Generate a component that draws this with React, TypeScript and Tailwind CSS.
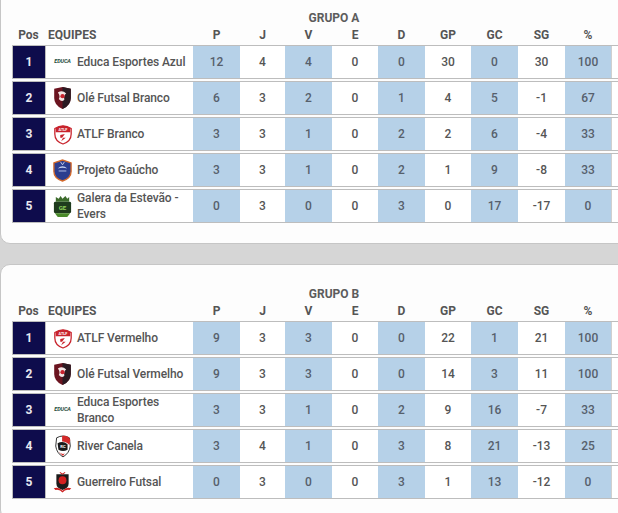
import type { ReactNode } from "react";

type Team = {
  pos: number;
  name: string;
  logo: ReactNode;
  stats: [number, number, number, number, number, number, number, number, number];
};

const COLS: Array<{ label: string; w: string }> = [
  { label: "P", w: "w-[47px]" },
  { label: "J", w: "w-[45px]" },
  { label: "V", w: "w-[47px]" },
  { label: "E", w: "w-[46px]" },
  { label: "D", w: "w-[47px]" },
  { label: "GP", w: "w-[46px]" },
  { label: "GC", w: "w-[47px]" },
  { label: "SG", w: "w-[47px]" },
  { label: "%", w: "w-[46px]" },
];

function EducaLogo() {
  return (
    <span className="flex w-[22px] items-center justify-center text-[5.5px] font-bold italic leading-none tracking-tight text-[#1d4a3a]">
      EDUCA
    </span>
  );
}

function OleLogo() {
  return (
    <svg viewBox="0 0 22 26" className="h-[24px] w-[21px]">
      <path d="M2 3 L11 1 L20 3 L20 13 Q20 21 11 25 Q2 21 2 13 Z" fill="#6b1420" />
      <path d="M11 1 L20 3 L20 13 Q20 21 11 25 Z" fill="#2a1a22" />
      <path d="M6 7 Q11 4 15 8 Q12 10 13 15 Q10 18 7 14 Q9 11 6 7 Z" fill="#f3e6e6" />
      <circle cx="11" cy="11" r="2.3" fill="#c9232f" />
    </svg>
  );
}

function AtlfLogo() {
  return (
    <svg viewBox="0 0 22 24" className="h-[22px] w-[20px]">
      <path d="M2 6 Q11 0 20 6 L20 12 Q20 20 11 23 Q2 20 2 12 Z" fill="#ffffff" stroke="#c8232c" strokeWidth="1.4" />
      <path d="M3 5.5 Q11 0.5 19 5.5 L19 10 L3 10 Z" fill="#c8232c" />
      <text x="11" y="9" textAnchor="middle" fontSize="4.2" fontWeight="700" fill="#ffffff" fontFamily="Roboto, sans-serif">ATLF</text>
      <path d="M8 13 L13 12 L10 16 L14 16 L9 20 L11 16 L8 16 Z" fill="#c8232c" />
    </svg>
  );
}

function GauchoLogo() {
  return (
    <svg viewBox="0 0 22 24" className="h-[23px] w-[21px]">
      <path d="M2 4 L11 1 L20 4 L20 13 Q20 20 11 23 Q2 20 2 13 Z" fill="#2c3d8f" stroke="#d4692a" strokeWidth="1.4" />
      <path d="M6 10 Q11 5 16 10 Q11 8 6 10 Z" fill="#c9d3f0" />
      <rect x="7" y="12" width="8" height="1" fill="#b7c2e8" />
      <path d="M9 3 L11 6 L13 3" stroke="#e8eefc" strokeWidth="0.8" fill="none" />
    </svg>
  );
}

function GaleraLogo() {
  return (
    <svg viewBox="0 0 22 24" className="h-[23px] w-[21px]">
      <rect x="2" y="7" width="18" height="12" rx="1.5" fill="#1f3b1d" />
      <path d="M4 7 L4 2 L7 4 L9 1 L11 4 L14 1 L16 4 L18 2 L18 7 Z" fill="#3d6b2c" />
      <text x="11" y="15.5" textAnchor="middle" fontSize="6.5" fontWeight="700" fill="#8fd05a" fontFamily="Roboto, sans-serif">GE</text>
      <path d="M3 19 L19 19 L16 23 L6 23 Z" fill="#4a8a2a" />
    </svg>
  );
}

function RiverLogo() {
  return (
    <svg viewBox="0 0 22 26" className="h-[24px] w-[20px]">
      <path d="M4 4 Q11 0 18 4 L19 13 Q18 21 11 25 Q4 21 3 13 Z" fill="#ffffff" stroke="#222" strokeWidth="1" />
      <path d="M10 2 Q17 1 19 6 L18 12 Q15 8 10 8 Z" fill="#d42a2a" />
      <path d="M5 10 Q11 7 16 11 L16 17 Q11 20 6 17 Z" fill="#1a1a1a" />
      <text x="11" y="15.5" textAnchor="middle" fontSize="4.5" fontWeight="700" fill="#ffffff" fontFamily="Roboto, sans-serif">RC</text>
      <path d="M6 19 Q10 23 13 21 L11 24 Z" fill="#d42a2a" />
    </svg>
  );
}

function GuerreiroLogo() {
  return (
    <svg viewBox="0 0 24 26" className="h-[24px] w-[22px]">
      <path d="M5 4 L19 4 L19 15 Q19 20 12 22 Q5 20 5 15 Z" fill="#1b1b1b" />
      <path d="M9 2 L12 4 L15 2" stroke="#cc2020" strokeWidth="1.2" fill="none" />
      <circle cx="12" cy="11" r="4.5" fill="#d42020" />
      <path d="M2 20 Q8 18 12 23 Q16 18 22 20 L20 22 Q15 21 12 25 Q9 21 4 22 Z" fill="#cc2020" />
    </svg>
  );
}

const GROUP_A: Team[] = [
  { pos: 1, name: "Educa Esportes Azul", logo: <EducaLogo />, stats: [12, 4, 4, 0, 0, 30, 0, 30, 100] },
  { pos: 2, name: "Olé Futsal Branco", logo: <OleLogo />, stats: [6, 3, 2, 0, 1, 4, 5, -1, 67] },
  { pos: 3, name: "ATLF Branco", logo: <AtlfLogo />, stats: [3, 3, 1, 0, 2, 2, 6, -4, 33] },
  { pos: 4, name: "Projeto Gaúcho", logo: <GauchoLogo />, stats: [3, 3, 1, 0, 2, 1, 9, -8, 33] },
  { pos: 5, name: "Galera da Estevão - Evers", logo: <GaleraLogo />, stats: [0, 3, 0, 0, 3, 0, 17, -17, 0] },
];

const GROUP_B: Team[] = [
  { pos: 1, name: "ATLF Vermelho", logo: <AtlfLogo />, stats: [9, 3, 3, 0, 0, 22, 1, 21, 100] },
  { pos: 2, name: "Olé Futsal Vermelho", logo: <OleLogo />, stats: [9, 3, 3, 0, 0, 14, 3, 11, 100] },
  { pos: 3, name: "Educa Esportes Branco", logo: <EducaLogo />, stats: [3, 3, 1, 0, 2, 9, 16, -7, 33] },
  { pos: 4, name: "River Canela", logo: <RiverLogo />, stats: [3, 4, 1, 0, 3, 8, 21, -13, 25] },
  { pos: 5, name: "Guerreiro Futsal", logo: <GuerreiroLogo />, stats: [0, 3, 0, 0, 3, 1, 13, -12, 0] },
];

function GroupCard({ title, teams }: { title: string; teams: Team[] }) {
  return (
    <section className="w-[680px] shrink-0 rounded-[10px] border border-[#c6c6c6] bg-[#fdfdfd] pb-[20px] pl-[11px] pt-[20px]">
      <div className="w-[644px]">
        <p className="text-center text-[12px] font-bold leading-[18px] text-[#5c5c5c]">{title}</p>
        <div className="flex h-[16px] items-center text-[12px] font-bold text-[#555]">
          <span className="w-[33px] text-center">Pos</span>
          <span className="w-[148px] pl-[3px]">EQUIPES</span>
          {COLS.map((c) => (
            <span key={c.label} className={`${c.w} text-center`}>
              {c.label}
            </span>
          ))}
        </div>
        <div className="mt-[2px] flex flex-col gap-[2px]">
          {teams.map((t) => (
            <div
              key={t.pos}
              className="flex h-[34px] border-y border-l border-[#bdbdbd] text-[12px] font-medium text-[#555]"
            >
              <div className="flex w-[32px] items-center justify-center bg-[#0e0c4c] font-bold text-[#e8e8f0]">
                {t.pos}
              </div>
              <div className="flex w-[148px] items-center gap-[4px] border-l border-[#bdbdbd] bg-white pl-[6px] pr-[1px]">
                <span className="flex w-[21px] shrink-0 justify-center">{t.logo}</span>
                <span className="leading-[16px] tracking-[-0.1px]">{t.name}</span>
              </div>
              {t.stats.map((s, i) => (
                <div
                  key={COLS[i].label}
                  className={`${COLS[i].w} flex items-center justify-center ${
                    i % 2 === 0 ? "bg-[#b6d1e8] text-[#56606c]" : "bg-white"
                  }`}
                >
                  {s}
                </div>
              ))}
              <div className="w-[45px] border-l border-[#d0d0d0] bg-white" />
            </div>
          ))}
        </div>
      </div>
    </section>
  );
}

export default function App() {
  return (
    <div
      className="flex h-[513px] w-[618px] flex-col gap-[20px] overflow-hidden bg-[#d6d6d6]"
      style={{ fontFamily: "Roboto, 'Liberation Sans', sans-serif" }}
    >
      <div className="-mt-[12px]">
        <GroupCard title="GRUPO A" teams={GROUP_A} />
      </div>
      <GroupCard title="GRUPO B" teams={GROUP_B} />
    </div>
  );
}
